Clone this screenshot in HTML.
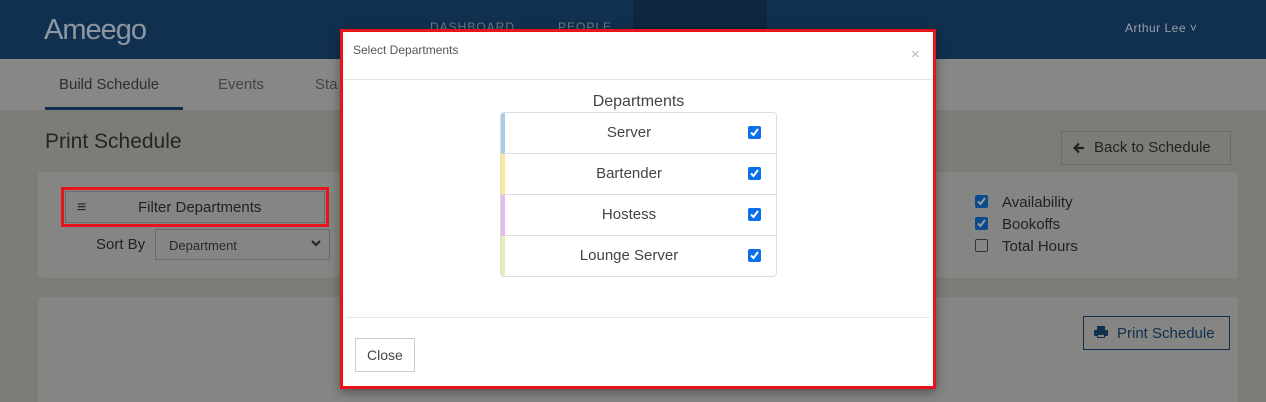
<!DOCTYPE html>
<html><head><style>
*{box-sizing:border-box;margin:0;padding:0}
html,body{width:1266px;height:402px;overflow:hidden}
body{position:relative;background:#7e7c78;font-family:"Liberation Sans",sans-serif}
.a{position:absolute}
.cb{position:absolute;width:13px;height:13px;border-radius:2px;background:#0a6fe8}
.cb svg,.dcb svg{position:absolute;left:1px;top:1px}
.dcb{position:absolute;width:13px;height:13px;border-radius:2px;background:#0b4a8f}
</style></head><body>
<div class="a" style="left:0;top:0;width:1266px;height:59px;background:#11304f"></div>
<div class="a" style="left:633px;top:0;width:134px;height:59px;background:#0e2740"></div>
<div class="a" style="left:44px;top:14px;color:#8d97a3;font-size:29px;letter-spacing:-1px">Ameego</div>
<div class="a" style="left:430px;top:20px;color:#6c7a8a;font-size:12px;letter-spacing:1px">DASHBOARD</div>
<div class="a" style="left:558px;top:20px;color:#6c7a8a;font-size:12px;letter-spacing:1px">PEOPLE</div>
<div class="a" style="left:1125px;top:21px;color:#97a0ab;font-size:12px;letter-spacing:.5px">Arthur Lee ˅</div>
<div class="a" style="left:0;top:59px;width:1266px;height:51px;background:#878787"></div>
<div class="a" style="left:59px;top:76px;color:#2e2e2e;font-size:15px">Build Schedule</div>
<div class="a" style="left:218px;top:76px;color:#444;font-size:15px">Events</div>
<div class="a" style="left:315px;top:76px;color:#444;font-size:15px">Sta</div>
<div class="a" style="left:45px;top:107px;width:138px;height:3px;background:#11304f"></div>
<div class="a" style="left:45px;top:130px;color:#252525;font-size:21px">Print Schedule</div>
<div class="a" style="left:1061px;top:131px;width:170px;height:34px;border:1px solid #6a6a6a;color:#222;font-size:15px;padding:7px 0 0 32px">Back to Schedule</div>
<svg class="a" style="left:1073px;top:142px" width="12" height="12" viewBox="0 0 12 12"><path d="M11 6H2M6 1.5L1.5 6 6 10.5" stroke="#222" stroke-width="2.2" fill="none"/></svg>
<div class="a" style="left:38px;top:172px;width:1200px;height:106px;background:#858583;border-radius:4px"></div>
<div class="a" style="left:61px;top:187px;width:268px;height:40px;border:3px solid #e8141c"></div>
<div class="a" style="left:65px;top:191px;width:260px;height:32px;border:1px solid #6a6a6a"></div>
<div class="a" style="left:77px;top:199px;color:#222;font-size:16px;font-weight:bold">≡</div>
<div class="a" style="left:138px;top:199px;color:#222;font-size:15px">Filter Departments</div>
<div class="a" style="left:96px;top:236px;color:#222;font-size:15px">Sort By</div>
<div class="a" style="left:155px;top:229px;width:175px;height:31px;border:1px solid #6a6a6a;color:#2a2a2a;font-size:13px;padding:8px 0 0 13px">Department</div>
<svg class="a" style="left:311px;top:240px" width="10" height="7" viewBox="0 0 10 7"><path d="M1 1l4 4 4-4" stroke="#222" stroke-width="2" fill="none"/></svg>
<div class="dcb" style="left:975px;top:195px"><svg width="11" height="11" viewBox="0 0 11 11"><path d="M2 5.5l2.5 2.5 4.5-6" stroke="#999" stroke-width="2" fill="none"/></svg></div>
<div class="dcb" style="left:975px;top:217px"><svg width="11" height="11" viewBox="0 0 11 11"><path d="M2 5.5l2.5 2.5 4.5-6" stroke="#999" stroke-width="2" fill="none"/></svg></div>
<div class="a" style="left:975px;top:239px;width:13px;height:13px;border:1px solid #333;border-radius:2px"></div>
<div class="a" style="left:1002px;top:192px;color:#222;font-size:15px;line-height:22px">Availability<br>Bookoffs<br>Total Hours</div>
<div class="a" style="left:38px;top:297px;width:1200px;height:105px;background:#858583;border-radius:4px 4px 0 0"></div>
<div class="a" style="left:1083px;top:316px;width:147px;height:34px;border:1px solid #11304f;color:#11304f;font-size:15px;padding:8px 0 0 33px">Print Schedule</div>
<svg class="a" style="left:1094px;top:326px" width="14" height="12" viewBox="0 0 14 12"><rect x="3" y="0" width="8" height="4" fill="#11304f"/><rect x="0" y="4" width="14" height="6" rx="1" fill="#11304f"/><rect x="3" y="8" width="8" height="4" fill="#11304f"/><rect x="4" y="9" width="6" height="2" fill="#858583"/></svg>
<div class="a" style="left:340px;top:29px;width:596px;height:360px;border:3px solid #e8141c;background:#fff;box-shadow:0 3px 10px rgba(0,0,0,.4)"></div>
<div class="a" style="left:353px;top:43px;color:#555;font-size:12px">Select Departments</div>
<div class="a" style="left:911px;top:46px;color:#bbb;font-size:15px">×</div>
<div class="a" style="left:343px;top:79px;width:590px;height:1px;background:#e5e5e5"></div>
<div class="a" style="left:500px;top:93px;width:277px;text-align:center;color:#444;font-size:16px">Departments</div>
<div class="a" style="left:500px;top:112px;width:277px;height:165px;border:1px solid #ddd;border-radius:4px;overflow:hidden">
<div style="height:41px;border-left:4px solid #a9cbea;border-bottom:1px solid #ddd"></div>
<div style="height:41px;border-left:4px solid #fde89a;border-bottom:1px solid #ddd"></div>
<div style="height:41px;border-left:4px solid #e2baee;border-bottom:1px solid #ddd"></div>
<div style="height:41px;border-left:4px solid #e8efb4"></div>
</div>
<div class="a" style="left:504px;top:112px;width:250px;text-align:center;color:#444;font-size:15px;line-height:41px">Server<br>Bartender<br>Hostess<br>Lounge Server</div>
<div class="cb" style="left:748px;top:126px"><svg width="11" height="11" viewBox="0 0 11 11"><path d="M2 5.5l2.5 2.5 4.5-6" stroke="#fff" stroke-width="2" fill="none"/></svg></div>
<div class="cb" style="left:748px;top:167px"><svg width="11" height="11" viewBox="0 0 11 11"><path d="M2 5.5l2.5 2.5 4.5-6" stroke="#fff" stroke-width="2" fill="none"/></svg></div>
<div class="cb" style="left:748px;top:208px"><svg width="11" height="11" viewBox="0 0 11 11"><path d="M2 5.5l2.5 2.5 4.5-6" stroke="#fff" stroke-width="2" fill="none"/></svg></div>
<div class="cb" style="left:748px;top:249px"><svg width="11" height="11" viewBox="0 0 11 11"><path d="M2 5.5l2.5 2.5 4.5-6" stroke="#fff" stroke-width="2" fill="none"/></svg></div>
<div class="a" style="left:346px;top:317px;width:584px;height:1px;background:#e5e5e5"></div>
<div class="a" style="left:355px;top:338px;width:60px;height:34px;border:1px solid #ccc;color:#444;font-size:14px;padding:8px 0 0 11px">Close</div>
</body></html>
